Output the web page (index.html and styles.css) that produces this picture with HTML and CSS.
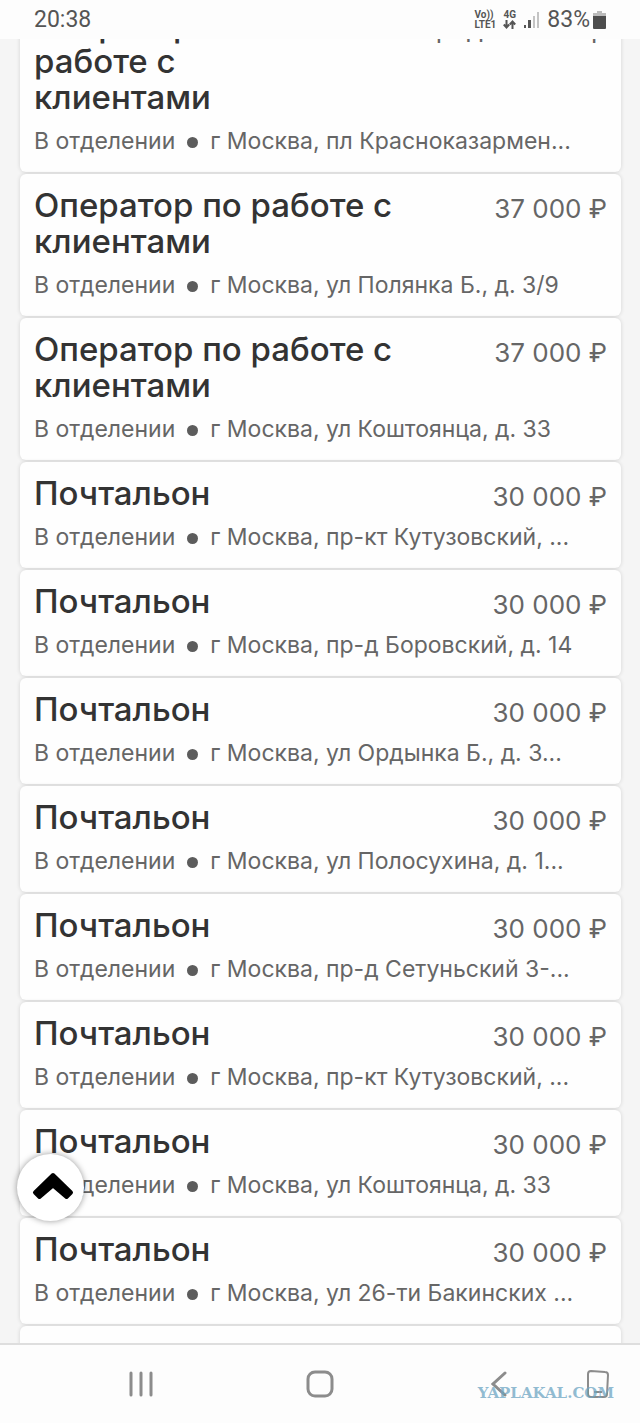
FILE: index.html
```
<!DOCTYPE html>
<html lang="ru">
<head>
    <meta charset="UTF-8">
    <meta name="viewport" content="width=device-width, initial-scale=1">
    <title>Вакансии</title>
    <link rel="stylesheet" href="styles.css">
</head>
<body>
    <header class="status-bar">
        <span class="time">20:38</span>
        <div class="status-icons">
            <span class="net">Vo))<br>LTE1</span>
            <span class="net">4G
                <svg width="13" height="9" viewBox="0 0 13 9" fill="none" stroke="#555" stroke-width="2">
                    <path d="M3.5 0v7M.8 4.5l2.7 3 2.7-3M9.5 9V2M6.8 4.5l2.7-3 2.7 3"/>
                </svg>
            </span>
            <svg width="17" height="18" viewBox="0 0 17 18">
                <path fill="#555" d="M1 14h2v3H1zM5 9h3v8H5z"/>
                <path fill="#c4c4c4" d="M10 5h2v12h-2zM14 1h2v16h-2z"/>
            </svg>
            <span class="percent">83%</span>
            <svg class="battery" width="13" height="18" viewBox="0 0 13 18">
                <path fill="#bbb" d="M4 0h5v2h4v4H0V2h4z"/>
                <path fill="#4d4d4d" d="M0 5h13v12a1 1 0 0 1-1 1H1a1 1 0 0 1-1-1z"/>
            </svg>
        </div>
    </header>

    <main class="content">
        <div class="list">
            <article class="card">
                <div class="card-head">
                    <h2>Оператор по работе с клиентами</h2>
                    <span class="salary">Определяется р</span>
                </div>
                <p class="place">В отделении<i class="dot"></i>г Москва, пл Красноказармен...</p>
            </article>
            <article class="card">
                <div class="card-head">
                    <h2>Оператор по работе с клиентами</h2>
                    <span class="salary">37 000 ₽</span>
                </div>
                <p class="place">В отделении<i class="dot"></i>г Москва, ул Полянка Б., д. 3/9</p>
            </article>
            <article class="card">
                <div class="card-head">
                    <h2>Оператор по работе с клиентами</h2>
                    <span class="salary">37 000 ₽</span>
                </div>
                <p class="place">В отделении<i class="dot"></i>г Москва, ул Коштоянца, д. 33</p>
            </article>
            <article class="card">
                <div class="card-head">
                    <h2>Почтальон</h2>
                    <span class="salary">30 000 ₽</span>
                </div>
                <p class="place">В отделении<i class="dot"></i>г Москва, пр-кт Кутузовский, ...</p>
            </article>
            <article class="card">
                <div class="card-head">
                    <h2>Почтальон</h2>
                    <span class="salary">30 000 ₽</span>
                </div>
                <p class="place">В отделении<i class="dot"></i>г Москва, пр-д Боровский, д. 14</p>
            </article>
            <article class="card">
                <div class="card-head">
                    <h2>Почтальон</h2>
                    <span class="salary">30 000 ₽</span>
                </div>
                <p class="place">В отделении<i class="dot"></i>г Москва, ул Ордынка Б., д. 3...</p>
            </article>
            <article class="card">
                <div class="card-head">
                    <h2>Почтальон</h2>
                    <span class="salary">30 000 ₽</span>
                </div>
                <p class="place">В отделении<i class="dot"></i>г Москва, ул Полосухина, д. 1...</p>
            </article>
            <article class="card">
                <div class="card-head">
                    <h2>Почтальон</h2>
                    <span class="salary">30 000 ₽</span>
                </div>
                <p class="place">В отделении<i class="dot"></i>г Москва, пр-д Сетуньский 3-...</p>
            </article>
            <article class="card">
                <div class="card-head">
                    <h2>Почтальон</h2>
                    <span class="salary">30 000 ₽</span>
                </div>
                <p class="place">В отделении<i class="dot"></i>г Москва, пр-кт Кутузовский, ...</p>
            </article>
            <article class="card">
                <div class="card-head">
                    <h2>Почтальон</h2>
                    <span class="salary">30 000 ₽</span>
                </div>
                <p class="place">В отделении<i class="dot"></i>г Москва, ул Коштоянца, д. 33</p>
            </article>
            <article class="card">
                <div class="card-head">
                    <h2>Почтальон</h2>
                    <span class="salary">30 000 ₽</span>
                </div>
                <p class="place">В отделении<i class="dot"></i>г Москва, ул 26-ти Бакинских ...</p>
            </article>
            <article class="card card-empty"></article>
        </div>
    </main>

    <button type="button" class="to-top" aria-label="Наверх">
        <svg width="42" height="28" viewBox="0 0 42 28" fill="#000" stroke="#000" stroke-width="4" stroke-linejoin="round">
            <path d="M21 3L39 20.500L34.500 25L21 13.500L7.500 25L3 20.500z"/>
        </svg>
    </button>

    <nav class="nav-bar">
        <button type="button" aria-label="Недавние">
            <svg width="26" height="26" viewBox="0 0 26 26" fill="none" stroke="#8c8c8c" stroke-width="3" stroke-linecap="round">
                <path d="M3 2v22M13 2v22M23 2v22"/>
            </svg>
        </button>
        <button type="button" aria-label="Домой">
            <svg width="28" height="28" viewBox="0 0 28 28" fill="none" stroke="#8c8c8c" stroke-width="3">
                <rect x="2" y="2" width="24" height="24" rx="7"/>
            </svg>
        </button>
        <button type="button" aria-label="Назад">
            <svg width="16" height="26" viewBox="0 0 16 26" fill="none" stroke="#8c8c8c" stroke-width="3" stroke-linecap="round">
                <path d="M14 2L2 13l12 11"/>
            </svg>
        </button>
        <button type="button" aria-label="Поворот экрана">
            <svg width="24" height="30" viewBox="0 0 24 30" fill="none" stroke="#8c8c8c" stroke-width="2">
                <path d="M5 2l14 1q3 0 3 3l-1 19q0 3-3 3H5q-3 0-3-3V5q0-3 3-3zM8 23h8"/>
            </svg>
        </button>
        <span class="watermark">YAPLAKAL.COM</span>
    </nav>
</body>
</html>
```
FILE: styles.css
```
* {
    box-sizing: border-box;
}

body {
    display: flex;
    flex-direction: column;
    height: 100vh;
    margin: 0;
    background: #f5f5f5;
    color: #666;
    font-family: Inter, "Noto Sans", sans-serif;
}

svg {
    flex: none;
}

.status-bar {
    display: flex;
    flex: none;
    justify-content: space-between;
    align-items: center;
    height: 39px;
    padding: 0 34px;
    background: #fdfdfd;
    color: #555;
    font-family: Roboto, sans-serif;
    font-size: 23px;
    z-index: 1;
}

.status-icons {
    display: flex;
    align-items: center;
    gap: 7px;
}

.net {
    display: flex;
    flex-direction: column;
    align-items: center;
    font-size: 10px;
    font-weight: bold;
    line-height: 10px;
}

.percent {
    font-size: 23px;
}

.battery {
    margin-left: -4px;
}

.content {
    flex: 1;
    min-height: 0;
    overflow: hidden;
}

/* the list is scrolled under the status bar */
.list {
    display: flex;
    flex-direction: column;
    gap: 2px;
    margin-top: -45px;
    padding: 0 19px 0 20px;
}

.card {
    padding: 13px 14px 16px;
    background: #fefefe;
    border-radius: 6px;
    box-shadow: 0 0 4px rgba(0, 0, 0, 0.14);
}

.card-empty {
    height: 106px;
}

.card-head {
    display: flex;
    justify-content: space-between;
    align-items: flex-start;
    gap: 40px;
}

h2 {
    margin: 0;
    color: #333;
    font-size: 33px;
    font-weight: 500;
    line-height: 36px;
}

.salary {
    flex: none;
    padding-top: 8px;
    font-size: 26px;
    line-height: 28px;
}

.place {
    margin: 11px 0 0;
    overflow: hidden;
    font-size: 23px;
    line-height: 30px;
    white-space: nowrap;
}

.dot {
    display: inline-block;
    width: 11px;
    height: 11px;
    margin: 0 12px 1px;
    border-radius: 50%;
    background: #5c5c5c;
}

.to-top {
    display: flex;
    position: fixed;
    bottom: 202px;
    left: 17px;
    justify-content: center;
    align-items: center;
    width: 67px;
    height: 67px;
    padding: 0 0 4px 4px;
    border: none;
    border-radius: 50%;
    background: #fff;
    box-shadow: 0 0 6px rgba(0, 0, 0, 0.4);
}

.nav-bar {
    display: grid;
    position: relative;
    flex: none;
    grid-template-columns: 28vw 28vw 28vw 3vw;
    height: 80px;
    padding-left: 8vw;
    border-top: 2px solid #dedede;
    background: #fdfdfd;
}

.nav-bar button {
    display: flex;
    justify-content: center;
    align-items: center;
    padding: 0;
    border: none;
    background: none;
}

.watermark {
    position: absolute;
    right: 26px;
    bottom: 21px;
    color: rgba(110, 165, 195, 0.75);
    font-family: "DejaVu Serif", serif;
    font-size: 15px;
    font-weight: bold;
    line-height: 18px;
}
```
